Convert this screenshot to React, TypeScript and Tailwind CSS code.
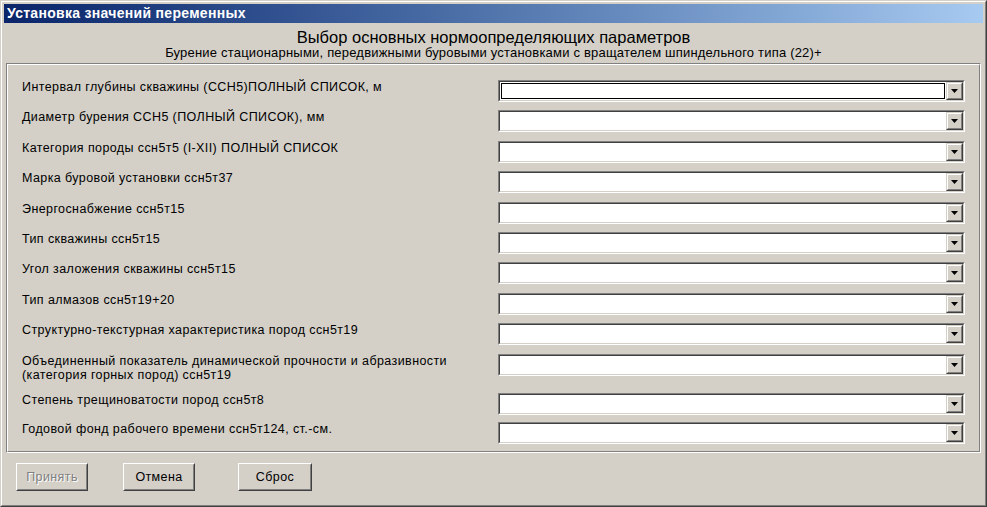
import React from 'react'

type Row = {
  label: React.ReactNode
  h: string
  focus?: boolean
}

const rows: Row[] = [
  { label: 'Интервал глубины скважины (ССН5)ПОЛНЫЙ СПИСОК, м', h: 'h-[30px]', focus: true },
  { label: 'Диаметр бурения ССН5 (ПОЛНЫЙ СПИСОК), мм', h: 'h-[31px]' },
  { label: 'Категория породы ссн5т5 (I-XII) ПОЛНЫЙ СПИСОК', h: 'h-[30px]' },
  { label: 'Марка буровой установки ссн5т37', h: 'h-[31px]' },
  { label: 'Энергоснабжение ссн5т15', h: 'h-[30px]' },
  { label: 'Тип скважины ссн5т15', h: 'h-[30px]' },
  { label: 'Угол заложения скважины ссн5т15', h: 'h-[31px]' },
  { label: 'Тип алмазов ссн5т19+20', h: 'h-[30px]' },
  { label: 'Структурно-текстурная характеристика пород ссн5т19', h: 'h-[31px]' },
  {
    label: (
      <>
        Объединенный показатель динамической прочности и абразивности
        <br />
        (категория горных пород) ссн5т19
      </>
    ),
    h: 'h-[39px]',
  },
  { label: 'Степень трещиноватости пород ссн5т8', h: 'h-[29px]' },
  { label: 'Годовой фонд рабочего времени ссн5т124, ст.-см.', h: 'h-[23px]' },
]

function Arrow() {
  return (
    <svg width="7" height="4" viewBox="0 0 7 4">
      <polygon points="0,0 7,0 3.5,4" fill="#000" />
    </svg>
  )
}

function Combo({ focus = false }: { focus?: boolean }) {
  return (
    <div className="flex h-[22px] w-[467px] shrink-0 border border-t-[#808080] border-l-[#808080] border-r-white border-b-white">
      <div className="flex flex-1 border border-t-[#404040] border-l-[#404040] border-r-[#d4d0c8] border-b-[#d4d0c8] bg-white">
        <div className="flex-1 p-px">
          {focus && <div className="h-full w-full border border-black" />}
        </div>
        <div className="flex h-full w-[17px] border border-t-[#d4d0c8] border-l-[#d4d0c8] border-r-[#404040] border-b-[#404040]">
          <div className="flex flex-1 items-center justify-center border border-t-white border-l-white border-r-[#808080] border-b-[#808080] bg-[#d4d0c8]">
            <Arrow />
          </div>
        </div>
      </div>
    </div>
  )
}

function WinButton({
  children,
  disabled = false,
  className = '',
}: {
  children: React.ReactNode
  disabled?: boolean
  className?: string
}) {
  return (
    <button
      type="button"
      disabled={disabled}
      className={`h-[28px] border border-t-white border-l-white border-r-[#404040] border-b-[#404040] bg-[#d4d0c8] p-0 ${className}`}
    >
      <span
        className={`flex h-full w-full items-center justify-center border border-t-[#d4d0c8] border-l-[#d4d0c8] border-r-[#808080] border-b-[#808080] text-[12.5px] tracking-[0.4px] ${
          disabled ? 'text-[#808080] [text-shadow:1px_1px_0_#fff]' : 'text-black'
        }`}
      >
        {children}
      </span>
    </button>
  )
}

export default function App() {
  return (
    <div className="h-[507px] w-[987px] border border-t-[#d4d0c8] border-l-[#d4d0c8] border-r-[#404040] border-b-[#404040] bg-[#d4d0c8] font-['Liberation_Sans',Arial,sans-serif] text-black">
      <div className="flex h-full flex-col border border-t-white border-l-white border-r-[#808080] border-b-[#808080] p-[2px]">
        {/* caption */}
        <div className="flex h-[19px] items-center bg-linear-to-r from-[#0a246a] to-[#a6caf0] pl-[3px] text-[14px] font-bold tracking-[0.3px] text-white">
          Установка значений переменных
        </div>

        {/* header */}
        <div className="pt-[5px] text-center">
          <div className="text-[16.5px] leading-[18px]">Выбор основных нормоопределяющих параметров</div>
          <div className="text-[13px] leading-[14px] tracking-[0.2px]">
            Бурение стационарными, передвижными буровыми установками с вращателем шпиндельного типа (22)+
          </div>
        </div>

        {/* group box */}
        <div className="mx-[2px] mt-[3px] border border-t-[#808080] border-l-[#808080] border-r-white border-b-white">
          <div className="flex flex-col border border-t-white border-l-white border-r-[#808080] border-b-[#808080] pt-[15px] pr-[14px] pb-[6px] pl-[14px]">
            {rows.map((r, i) => (
              <div key={i} className={`flex items-start ${r.h}`}>
                <div className="flex-1 text-[12.5px] leading-[14px] tracking-[0.4px]">{r.label}</div>
                <Combo focus={r.focus} />
              </div>
            ))}
          </div>
        </div>

        {/* buttons */}
        <div className="mt-[10px] flex">
          <WinButton disabled className="ml-[12px] w-[72px]">
            Принять
          </WinButton>
          <WinButton className="ml-[35px] w-[72px]">Отмена</WinButton>
          <WinButton className="ml-[43px] w-[74px]">Сброс</WinButton>
        </div>
      </div>
    </div>
  )
}
